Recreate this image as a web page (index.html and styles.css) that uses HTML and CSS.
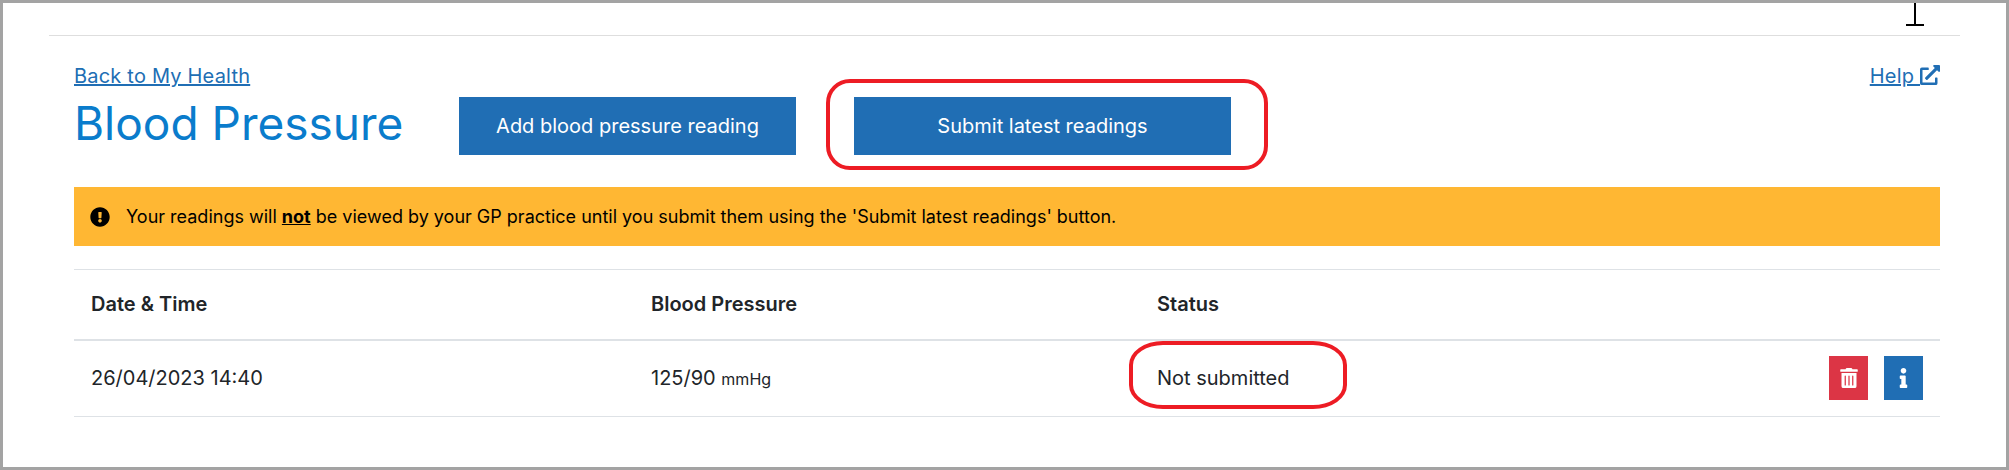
FILE: index.html
```html
<!DOCTYPE html>
<html lang="en">
<head>
    <meta charset="UTF-8">
    <title>Blood Pressure</title>
    <link rel="stylesheet" href="styles.css">
</head>
<body>
    <div class="page">
        <div class="rule"></div>
        <div class="content">
            <div class="top">
                <div class="title-block">
                    <a href="#" class="back-link">Back to My Health</a>
                    <h1>Blood Pressure</h1>
                </div>
                <button class="btn btn-add">Add blood pressure reading</button>
                <button class="btn btn-submit">Submit latest readings</button>
                <a href="#" class="help-link">Help <svg class="help-icon" viewBox="0 0 512 512"><path d="M432,320H400a16,16,0,0,0-16,16V448H64V128H208a16,16,0,0,0,16-16V80a16,16,0,0,0-16-16H48A48,48,0,0,0,0,112V464a48,48,0,0,0,48,48H400a48,48,0,0,0,48-48V336A16,16,0,0,0,432,320ZM488,0h-128c-21.37,0-32.05,25.91-17,41l35.73,35.73L135,320.37a24,24,0,0,0,0,34L157.67,377a24,24,0,0,0,34,0L435.28,133.32,471,169c15,15,41,4.5,41-17V24A24,24,0,0,0,488,0Z"/></svg></a>
            </div>

            <div class="alert">
                <svg class="alert-icon" viewBox="0 0 512 512"><path d="M504 256c0 136.997-111.043 248-248 248S8 392.997 8 256C8 119.083 119.043 8 256 8s248 111.083 248 248zm-248 50c-25.405 0-46 20.595-46 46s20.595 46 46 46 46-20.595 46-46-20.595-46-46-46zm-43.673-165.346l7.418 136c.347 6.364 5.609 11.346 11.982 11.346h48.546c6.373 0 11.635-4.982 11.982-11.346l7.418-136c.375-6.874-5.098-12.654-11.982-12.654h-63.383c-6.884 0-12.356 5.78-11.981 12.654z"/></svg>
                <span>Your readings will <b class="not">not</b> be viewed by your GP practice until you submit them using the 'Submit latest readings' button.</span>
            </div>

            <table class="readings">
                <thead>
                    <tr>
                        <th class="col-date">Date &amp; Time</th>
                        <th class="col-bp">Blood Pressure</th>
                        <th>Status</th>
                        <th></th>
                    </tr>
                </thead>
                <tbody>
                    <tr>
                        <td>26/04/2023 14:40</td>
                        <td>125/90 <small>mmHg</small></td>
                        <td>Not submitted</td>
                        <td class="actions">
                            <button class="icon-btn icon-btn-red"><svg class="trash-icon" viewBox="0 0 448 512"><path d="M32 464a48 48 0 0 0 48 48h288a48 48 0 0 0 48-48V128H32zm272-256a16 16 0 0 1 32 0v224a16 16 0 0 1-32 0zm-96 0a16 16 0 0 1 32 0v224a16 16 0 0 1-32 0zm-96 0a16 16 0 0 1 32 0v224a16 16 0 0 1-32 0zM432 32H312l-9.4-18.7A24 24 0 0 0 281.1 0H166.8a23.72 23.72 0 0 0-21.4 13.3L136 32H16A16 16 0 0 0 0 48v32a16 16 0 0 0 16 16h416a16 16 0 0 0 16-16V48a16 16 0 0 0-16-16z"/></svg></button>
                            <button class="icon-btn"><svg class="info-icon" viewBox="0 0 192 512"><path d="M20 424.229h20V279.771H20c-11.046 0-20-8.954-20-20V212c0-11.046 8.954-20 20-20h112c11.046 0 20 8.954 20 20v212.229h20c11.046 0 20 8.954 20 20V492c0 11.046-8.954 20-20 20H20c-11.046 0-20-8.954-20-20v-47.771c0-11.046 8.954-20 20-20zM96 0C56.235 0 24 32.235 24 72s32.235 72 72 72 72-32.235 72-72S135.764 0 96 0z"/></svg></button>
                        </td>
                    </tr>
                </tbody>
            </table>
        </div>

        <!-- annotations drawn over the screenshot -->
        <div class="ring ring-submit"></div>
        <div class="ring ring-status"></div>
        <div class="cursor"></div>
    </div>
</body>
</html>
```

FILE: styles.css
```css
* {
    box-sizing: border-box;
}
body {
    margin: 0;
    font-family: Inter, "Open Sans", sans-serif;
    color: #212529;
}
.page {
    position: relative;
    height: 470px;
    border: 3px solid #a3a3a3;
    padding: 32px 46px 0 46px;
    background: #fff;
}
.rule {
    height: 1px;
    background: #dedede;
}
.content {
    padding: 0 20px 0 25px;
}
.top {
    display: flex;
    align-items: flex-start;
    height: 151px;
    padding-top: 25px;
}
.title-block {
    width: 385px;
}
.back-link,
.help-link {
    color: #206eb4;
    font-size: 20px;
    line-height: 30px;
    letter-spacing: 0.2px;
}
.back-link {
    display: block;
}
h1 {
    margin: 0;
    font-size: 46px;
    line-height: 64px;
    font-weight: 400;
    color: #0a7ccc;
}
.btn {
    height: 58px;
    margin-top: 36px;
    border: none;
    background: #206eb4;
    color: #fff;
    font-family: inherit;
    font-size: 20px;
}
.btn-add {
    width: 337px;
}
.btn-submit {
    width: 377px;
    margin-left: 58px;
}
.help-link {
    margin-left: auto;
}
.help-icon {
    width: 20px;
    height: 20px;
    fill: #206eb4;
    vertical-align: -2px;
}
.alert {
    display: flex;
    align-items: center;
    gap: 16px;
    height: 59px;
    padding-left: 16px;
    background: #ffb733;
    color: #000;
    font-size: 18px;
}
.alert-icon {
    width: 20px;
    height: 20px;
}
.not {
    text-decoration: underline;
}
.readings {
    width: 100%;
    margin-top: 23px;
    border-collapse: collapse;
    font-size: 20px;
}
.readings th,
.readings td {
    padding: 0 17px;
    text-align: left;
}
.readings th {
    height: 70px;
    font-weight: 600;
    border-top: 1px solid #dee2e6;
    border-bottom: 2px solid #dee2e6;
}
.readings td {
    height: 77px;
    border-bottom: 1px solid #dee2e6;
}
.col-date {
    width: 560px;
}
.col-bp {
    width: 506px;
}
small {
    font-size: 16px;
}
.readings .actions {
    padding-right: 17px;
    text-align: right;
    white-space: nowrap;
}
.icon-btn {
    width: 39px;
    height: 44px;
    margin-left: 10px;
    padding: 0;
    border: none;
    background: #206eb4;
    vertical-align: middle;
}
.icon-btn-red {
    background: #dc3545;
}
.trash-icon,
.info-icon {
    display: block;
    height: 20px;
    margin: auto;
    fill: #fff;
}
.trash-icon {
    width: 18px;
}
.info-icon {
    width: 9px;
}
.ring {
    position: absolute;
    border: 4px solid #ed1c24;
}
.ring-submit {
    left: 823px;
    top: 76px;
    width: 442px;
    height: 91px;
    border-radius: 24px;
}
.ring-status {
    left: 1126px;
    top: 338px;
    width: 218px;
    height: 68px;
    border-radius: 34px / 24px;
}
.cursor {
    position: absolute;
    left: 1911px;
    top: 0;
    width: 2px;
    height: 23px;
    background: #000;
}
.cursor::after {
    content: "";
    position: absolute;
    left: -8px;
    bottom: 0;
    width: 18px;
    height: 2px;
    background: #000;
}
```
